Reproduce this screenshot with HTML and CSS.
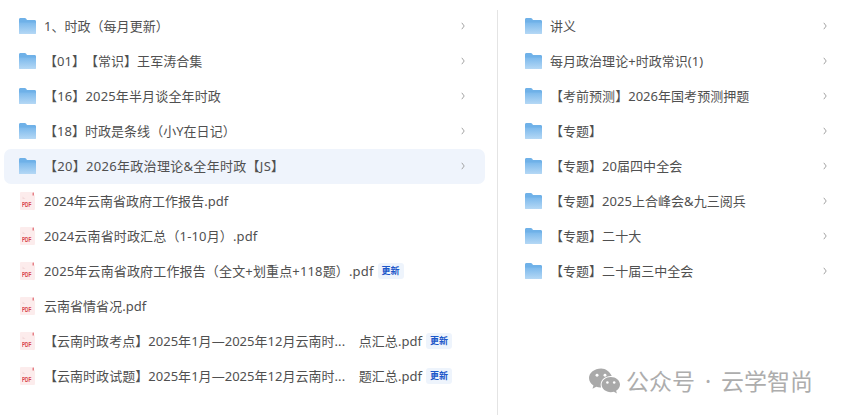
FILE: index.html
```html
<!DOCTYPE html>
<html lang="zh-CN">
<head>
<meta charset="utf-8">
<title>文件列表</title>
<link rel="stylesheet" href="styles.css">
</head>
<body>
<svg class="defs" width="0" height="0" aria-hidden="true">
  <defs>
    <linearGradient id="fg" x1="0" y1="0" x2="0" y2="1">
      <stop offset="0" stop-color="#7cb9ec"/>
      <stop offset="1" stop-color="#b5d8f5"/>
    </linearGradient>
    <symbol id="folder" viewBox="0 0 17 16">
      <path d="M0 1.5C0 .7.6 0 1.4 0h4.4c.5 0 .9.2 1.2.6L8 2h7.6c.8 0 1.4.6 1.4 1.4v11.2c0 .8-.6 1.4-1.4 1.4H1.4C.6 16 0 15.4 0 14.6z" fill="#6fb1e8"/>
      <path d="M0 4.6h15.6c.8 0 1.4.5 1.4 1.2v8.8c0 .8-.6 1.4-1.4 1.4H1.4C.6 16 0 15.4 0 14.6z" fill="url(#fg)"/>
    </symbol>
    <symbol id="pdf" viewBox="0 0 15 18">
      <path d="M1 0h10.5L15 3.5V17a1 1 0 0 1-1 1H1a1 1 0 0 1-1-1V1a1 1 0 0 1 1-1z" fill="#fcecec"/>
      <path d="M12.600 .6h1.200v3h-1.200z" fill="#e0626a"/>
      <path d="M2.500 4.500l3 2.500h-3z" fill="#f3d9da"/>
    </symbol>
    <symbol id="chev" viewBox="0 0 4 8">
      <path d="M.8 .8L3.200 4 .8 7.200" fill="none" stroke="#9a9a9a" stroke-width=".9"/>
    </symbol>
  </defs>
</svg>
<main class="page">
  <section class="panel panel-left">
    <div class="row"><svg class="ico-folder"><use href="#folder"/></svg><span class="name">1、时政（每月更新）</span><svg class="chev"><use href="#chev"/></svg></div>
    <div class="row"><svg class="ico-folder"><use href="#folder"/></svg><span class="name">【01】【常识】王军涛合集</span><svg class="chev"><use href="#chev"/></svg></div>
    <div class="row"><svg class="ico-folder"><use href="#folder"/></svg><span class="name loose">【16】2025年半月谈全年时政</span><svg class="chev"><use href="#chev"/></svg></div>
    <div class="row"><svg class="ico-folder"><use href="#folder"/></svg><span class="name">【18】时政是条线（小Y在日记）</span><svg class="chev"><use href="#chev"/></svg></div>
    <div class="row active"><svg class="ico-folder"><use href="#folder"/></svg><span class="name looser">【20】2026年政治理论&amp;全年时政【JS】</span><svg class="chev"><use href="#chev"/></svg></div>
    <div class="row"><span class="ico-pdf"><svg class="pdf-bg"><use href="#pdf"/></svg><b class="pdf-tag">PDF</b></span><span class="name">2024年云南省政府工作报告.pdf</span></div>
    <div class="row"><span class="ico-pdf"><svg class="pdf-bg"><use href="#pdf"/></svg><b class="pdf-tag">PDF</b></span><span class="name loose">2024云南省时政汇总（1-10月）.pdf</span></div>
    <div class="row"><span class="ico-pdf"><svg class="pdf-bg"><use href="#pdf"/></svg><b class="pdf-tag">PDF</b></span><span class="name loose">2025年云南省政府工作报告（全文+划重点+118题）.pdf</span><span class="badge">更新</span></div>
    <div class="row"><span class="ico-pdf"><svg class="pdf-bg"><use href="#pdf"/></svg><b class="pdf-tag">PDF</b></span><span class="name">云南省情省况.pdf</span></div>
    <div class="row"><span class="ico-pdf"><svg class="pdf-bg"><use href="#pdf"/></svg><b class="pdf-tag">PDF</b></span><span class="name">【云南时政考点】2025年1月—2025年12月云南时...    点汇总.pdf</span><span class="badge">更新</span></div>
    <div class="row"><span class="ico-pdf"><svg class="pdf-bg"><use href="#pdf"/></svg><b class="pdf-tag">PDF</b></span><span class="name">【云南时政试题】2025年1月—2025年12月云南时...    题汇总.pdf</span><span class="badge">更新</span></div>
  </section>
  <div class="divider"></div>
  <section class="panel panel-right">
    <div class="row"><svg class="ico-folder"><use href="#folder"/></svg><span class="name">讲义</span><svg class="chev"><use href="#chev"/></svg></div>
    <div class="row"><svg class="ico-folder"><use href="#folder"/></svg><span class="name">每月政治理论+时政常识(1)</span><svg class="chev"><use href="#chev"/></svg></div>
    <div class="row"><svg class="ico-folder"><use href="#folder"/></svg><span class="name">【考前预测】2026年国考预测押题</span><svg class="chev"><use href="#chev"/></svg></div>
    <div class="row"><svg class="ico-folder"><use href="#folder"/></svg><span class="name">【专题】</span><svg class="chev"><use href="#chev"/></svg></div>
    <div class="row"><svg class="ico-folder"><use href="#folder"/></svg><span class="name">【专题】20届四中全会</span><svg class="chev"><use href="#chev"/></svg></div>
    <div class="row"><svg class="ico-folder"><use href="#folder"/></svg><span class="name">【专题】2025上合峰会&amp;九三阅兵</span><svg class="chev"><use href="#chev"/></svg></div>
    <div class="row"><svg class="ico-folder"><use href="#folder"/></svg><span class="name">【专题】二十大</span><svg class="chev"><use href="#chev"/></svg></div>
    <div class="row"><svg class="ico-folder"><use href="#folder"/></svg><span class="name">【专题】二十届三中全会</span><svg class="chev"><use href="#chev"/></svg></div>
  </section>
</main>
<div class="watermark">
  <svg class="wx" viewBox="0 0 32 26" aria-hidden="true">
    <path d="M12.500 0C5.600 0 0 4.400 0 9.900c0 3.100 1.800 5.900 4.600 7.700L3.600 21l3.900-2.100c1.300.4 2.600.7 4.100.7h.9c-.3-.9-.5-1.800-.5-2.800 0-5 4.800-9 10.600-9h.9C21.500 3.300 17.400 0 12.500 0z" fill="#a9a9a9"/>
    <path d="M22.500 8.800c-5.200 0-9.500 3.500-9.500 7.900s4.300 7.900 9.500 7.900c1.100 0 2.200-.2 3.200-.5l3.100 1.700-.8-2.800c2.500-1.500 4-3.700 4-6.300 0-4.400-4.300-7.900-9.500-7.900z" fill="#a9a9a9"/>
    <circle cx="8.300" cy="7" r="1.500" fill="#fff"/><circle cx="16.500" cy="7" r="1.500" fill="#fff"/>
    <circle cx="19" cy="14.500" r="1.300" fill="#fff"/><circle cx="26" cy="14.500" r="1.300" fill="#fff"/>
  </svg>
  <span class="wm-text">公众号 · 云学智尚</span>
</div>
</body>
</html>
```
FILE: styles.css
```css
* { box-sizing: border-box; }
html, body { margin: 0; padding: 0; }
body {
  width: 842px;
  height: 415px;
  background: #fff;
  overflow: hidden;
  position: relative;
  font-family: "Noto Sans", "Noto Sans CJK SC", sans-serif;
  color: #505050;
  text-spacing-trim: space-all;
}
.defs { display: block; height: 0; }
.page { display: flex; height: 415px; padding: 9px 0 0 4px; }
.panel { display: flex; flex-direction: column; }
.panel-left { width: 493px; padding-right: 12px; }
.divider { width: 1px; margin-top: 1px; background: #e4e4e4; flex: none; }
.panel-right { flex: 1; padding: 0 15px 0 27px; }
.row {
  display: flex;
  align-items: center;
  height: 35px;
  flex: none;
  padding: 0 20px 1px 15px;
  border-radius: 7px;
  font-size: 13px;
  letter-spacing: .03px;
}
.panel-right .row { padding-left: 0; padding-right: 0; }
.row.active { background: #eff4fc; }
.ico-folder { width: 17px; height: 16px; flex: none; }
.ico-pdf { position: relative; width: 15px; height: 18px; flex: none; margin: 0 1px; }
.pdf-bg { width: 15px; height: 18px; display: block; }
.pdf-tag {
  position: absolute;
  left: 2px;
  top: 9px;
  font: bold 6.500px/8px "Liberation Sans", sans-serif;
  letter-spacing: 0;
  color: #d8434b;
  transform: scaleX(.72);
  transform-origin: left center;
}
.name { margin-left: 8px; white-space: pre; line-height: 20px; }
.name.loose { letter-spacing: .15px; }
.name.looser { letter-spacing: .3px; }
.chev { width: 4px; height: 8px; margin-left: auto; flex: none; }
.badge {
  margin-left: 4px;
  width: 26px;
  height: 16px;
  border-radius: 3px;
  background: #eef4fc;
  color: #1c57c9;
  font-size: 9px;
  font-weight: 700;
  line-height: 16px;
  text-align: center;
  flex: none;
}
.watermark {
  position: absolute;
  left: 589px;
  top: 366px;
  display: flex;
  align-items: center;
  gap: 6px;
  color: #adadad;
}
.wx { width: 31px; height: 26px; flex: none; }
.wm-text { font-size: 23px; line-height: 30px; white-space: pre; word-spacing: 4px; }
```
